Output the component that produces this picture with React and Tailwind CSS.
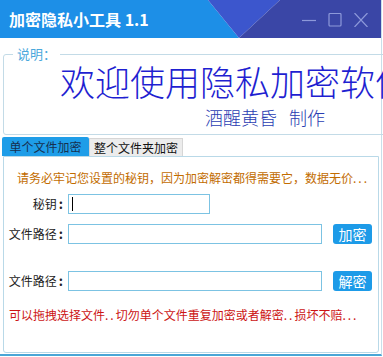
import React from "react";

const cjk = { fontFamily: '"Noto Sans CJK SC", "Microsoft YaHei", sans-serif' };

function TitleBar() {
  return (
    <div className="relative h-[38px] w-[381px] overflow-hidden">
      {/* diagonal backdrop */}
      <svg className="absolute inset-0" width="381" height="38" viewBox="0 0 381 38">
        <polygon points="0,0 208,0 239,38 0,38" fill="#1d8fe7" />
        <polygon points="208,0 280,0 239,38" fill="#3c56cd" />
        <polygon points="280,0 381,0 381,38 239,38" fill="#3a46a6" />
      </svg>
      <div className="relative flex h-full items-center justify-between pl-[9px] pr-[13px]">
        <span className="text-[16px] font-bold leading-none text-white" style={cjk}>
          加密隐私小工具 1.1
        </span>
        <div className="flex items-center gap-[12px] pt-[2px]">
          <svg width="14" height="14" viewBox="0 0 14 14">
            <line x1="0" y1="7.5" x2="14" y2="7.5" stroke="#8d99da" strokeWidth="1.2" />
          </svg>
          <svg width="14" height="14" viewBox="0 0 14 14">
            <rect x="1" y="0.5" width="12" height="12.5" rx="1" fill="none" stroke="#8d99da" strokeWidth="1.2" />
          </svg>
          <svg width="14" height="14" viewBox="0 0 14 14">
            <path d="M0.5 0 L13.5 14 M13.5 0 L0.5 14" stroke="#8d99da" strokeWidth="1.2" />
          </svg>
        </div>
      </div>
    </div>
  );
}

function Row({ label, button }) {
  return (
    <div className="flex h-[20px] items-center">
      <span className="flex w-[61px] justify-end whitespace-nowrap pr-[5px] text-[12px] leading-[20px] text-[#222]">
        {label}
        <b className="ml-[2px] text-[13px] font-bold">:</b>
      </span>
      <div className={`h-[20px] shrink-0 border border-[#7cc3e3] bg-white ${button ? "w-[254px]" : "w-[142px]"}`}>
        {!button && <div className="ml-[3px] mt-[2px] h-[14px] w-px bg-black" />}
      </div>
      {button && (
        <button className="ml-[11px] h-[20px] w-[39px] shrink-0 rounded-[3px] bg-[#1d9be8] text-[14px] leading-[20px] text-white">
          {button}
        </button>
      )}
    </div>
  );
}

const Dots = ({ n }) => <span className="tracking-[2px]">{".".repeat(n)}</span>;

export default function App() {
  return (
    <div className="h-[357px] w-[383px] overflow-hidden bg-white" style={cjk}>
      <div className="h-[356px] w-[382px] border-r border-b-2 border-r-[#c9dfea] border-b-[#4aa6d6]">
        <TitleBar />

        {/* description group */}
        <fieldset className="ml-[3px] mt-[8px] h-[89px] w-[376px] rounded-[3px] border border-[#c3dbe7]">
          <legend className="ml-[9px] px-[4px] text-[13px] leading-[16px] text-[#4aa8dc]">说明：</legend>
          <div className="mt-[1px] w-full overflow-hidden whitespace-nowrap pl-[56px] text-[35px] font-light leading-[36px] text-[#1f1fd1]">
            欢迎使用隐私加密软件
          </div>
          <div className="mt-[7px] whitespace-nowrap pl-[201px] text-[18px] font-light leading-[22px] text-[#2a3db2]">
            酒醒黄昏<span className="ml-[12px]">制作</span>
          </div>
        </fieldset>

        {/* tabs */}
        <div className="ml-[2px] mt-[2px] flex h-[19px] items-end">
          <div className="h-[19px] w-[87px] rounded-t-[2px] bg-[#1e9de8] text-center text-[12px] leading-[19px] text-[#17304f]">
            单个文件加密
          </div>
          <div className="h-[18px] w-[94px] border border-b-0 border-[#d6d6d6] bg-[#ececec] text-center text-[12px] leading-[17px] text-[#111]">
            整个文件夹加密
          </div>
        </div>

        {/* tab panel */}
        <div className="ml-[3px] h-[197px] w-[376px] rounded-b-[3px] border border-[#b9d9e8] pl-[3px]">
          <div className="mt-[13px] whitespace-nowrap pl-[10px] text-[12px] leading-[16px] text-[#c26c00]">
            请务必牢记您设置的秘钥，因为加密解密都得需要它，数据无价<Dots n={3} />
          </div>
          <div className="mt-[8px]">
            <Row label="秘钥" />
          </div>
          <div className="mt-[10px]">
            <Row label="文件路径" button="加密" />
          </div>
          <div className="mt-[27px]">
            <Row label="文件路径" button="解密" />
          </div>
          <div className="mt-[16px] whitespace-nowrap pl-[2px] text-[12px] leading-[16px] text-[#cc1414]">
            可以拖拽选择文件<Dots n={2} />切勿单个文件重复加密或者解密<Dots n={2} />损坏不赔<Dots n={3} />
          </div>
        </div>
      </div>
    </div>
  );
}
